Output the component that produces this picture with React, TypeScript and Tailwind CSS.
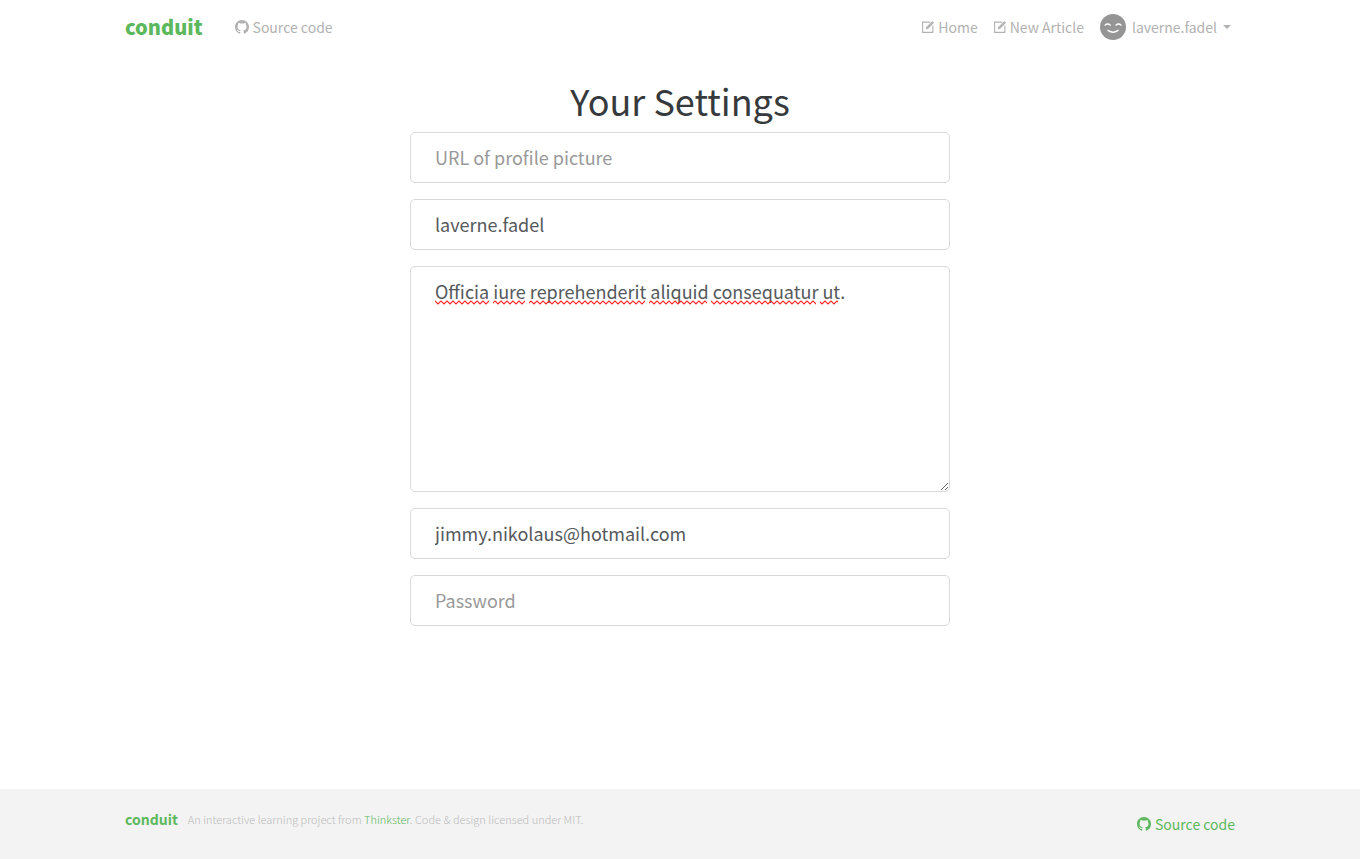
import React from "react";

const fieldBase =
  "block w-full rounded-[5px] border border-[#d9d9d9] bg-white px-6 text-lg leading-6 text-[#55595c] placeholder:text-[#999] outline-none focus:border-[#66afe9]";

function GithubMark() {
  return (
    <svg viewBox="0 0 16 16" className="h-3.5 w-3.5 shrink-0" fill="currentColor" aria-hidden="true">
      <path d="M8 0C3.58 0 0 3.58 0 8c0 3.54 2.29 6.53 5.47 7.59.4.07.55-.17.55-.38 0-.19-.01-.82-.01-1.49-2.01.37-2.53-.49-2.69-.94-.09-.23-.48-.94-.82-1.13-.28-.15-.68-.52-.01-.53.63-.01 1.08.58 1.23.82.72 1.21 1.87.87 2.33.66.07-.52.28-.87.51-1.07-1.78-.2-3.64-.89-3.64-3.95 0-.87.31-1.59.82-2.15-.08-.2-.36-1.02.08-2.12 0 0 .67-.21 2.2.82.64-.18 1.32-.27 2-.27s1.36.09 2 .27c1.53-1.04 2.2-.82 2.2-.82.44 1.1.16 1.92.08 2.12.51.56.82 1.27.82 2.15 0 3.07-1.87 3.75-3.65 3.95.29.25.54.73.54 1.48 0 1.07-.01 1.93-.01 2.2 0 .21.15.46.55.38A8.01 8.01 0 0 0 16 8c0-4.42-3.58-8-8-8z" />
    </svg>
  );
}

function ComposeMark() {
  return (
    <svg viewBox="0 0 12 12" className="h-3 w-3 shrink-0" aria-hidden="true">
      <path d="M8 1.1H.6v10.3h10.3V4.4" fill="none" stroke="currentColor" strokeWidth="1.1" />
      <path d="M3.7 8.6l.7-2.5L10.3.1 12 1.8 6.2 7.8z" fill="currentColor" />
    </svg>
  );
}

function Avatar() {
  return (
    <svg viewBox="0 0 26 26" className="h-[26px] w-[26px] shrink-0" aria-hidden="true">
      <circle cx="13" cy="13" r="13" fill="#959595" />
      <g fill="none" stroke="#fff" strokeLinecap="round">
        <path d="M5 11.2q2.7-2.4 5.4 0M15.8 11.2q2.7-2.4 5.4 0" strokeWidth="1.2" />
        <path d="M8 16.4q5 3.6 10 0" strokeWidth="1.5" />
      </g>
    </svg>
  );
}

const misspelled = [
  [0, 54],
  [58, 32],
  [94, 116],
  [214, 58],
  [276, 105],
  [385, 18],
];

function SpellingMarks() {
  return (
    <svg className="pointer-events-none absolute top-[34px] left-[25px] h-[5px] w-[410px]" aria-hidden="true">
      <defs>
        <pattern id="wave" width="6" height="5" patternUnits="userSpaceOnUse">
          <path d="M-1.5 2.5L0 1l3 3 3-3 1.5 1.5" fill="none" stroke="#f22" strokeWidth="1.2" />
        </pattern>
      </defs>
      {misspelled.map(([x, w]) => (
        <rect key={x} x={x} width={w} height="5" fill="url(#wave)" />
      ))}
    </svg>
  );
}

export default function App() {
  return (
    <div className="flex min-h-screen flex-col bg-white font-['Noto_Sans_CJK_SC','Noto_Sans',sans-serif] text-[#373a3c]">
      <nav className="px-4">
        <div className="mx-auto flex h-[54px] w-full max-w-[1110px] items-center text-sm leading-6 text-[#b2b2b2]">
          <a href="#" className="mr-8 text-xl font-black text-[#5cb85c]">conduit</a>
          <a href="#source" className="flex items-center gap-1"><GithubMark />Source code</a>
          <div className="ml-auto flex items-center gap-4 pr-1">
            <a href="#home" className="flex items-center gap-1"><ComposeMark />Home</a>
            <a href="#new" className="flex items-center gap-1"><ComposeMark />New Article</a>
            <button type="button" className="flex items-center gap-1.5">
              <Avatar />
              <span>laverne.fadel</span>
              <svg viewBox="0 0 8 4" className="h-1 w-2" fill="currentColor" aria-hidden="true"><path d="M0 0h8L4 4z" /></svg>
            </button>
          </div>
        </div>
      </nav>

      <main className="mx-auto w-full max-w-[540px] flex-1 pt-6">
        <h1 className="mb-2.5 text-center text-4xl leading-[44px]">Your Settings</h1>
        <form className="flex flex-col gap-4">
          <input type="text" aria-label="URL of profile picture" placeholder="URL of profile picture" className={`${fieldBase} h-[51px] pb-0.5`} />
          <input type="text" aria-label="Username" defaultValue="laverne.fadel" className={`${fieldBase} h-[51px] pb-0.5`} />
          <div className="relative">
            <textarea aria-label="Bio" spellCheck={false} defaultValue="Officia iure reprehenderit aliquid consequatur ut." className={`${fieldBase} h-[226px] resize-y py-3`} />
            <SpellingMarks />
          </div>
          <input type="email" aria-label="Email" defaultValue="jimmy.nikolaus@hotmail.com" className={`${fieldBase} h-[51px] pb-0.5`} />
          <input type="password" aria-label="Password" placeholder="Password" className={`${fieldBase} h-[51px] pb-0.5`} />
        </form>
      </main>

      <footer className="bg-[#f3f3f3] px-4">
        <div className="mx-auto flex h-[70px] w-full max-w-[1110px] items-center">
          <a href="#" className="mr-2.5 mb-2.5 text-sm font-bold text-[#5cb85c]">conduit</a>
          <p className="mb-2.5 text-[11px] font-light text-[#bbb]">
            An interactive learning project from <a href="#thinkster" className="text-[#5cb85c]">Thinkster</a>. Code &amp; design licensed under MIT.
          </p>
          <a href="#source" className="ml-auto flex items-center gap-1 text-sm text-[#5cb85c]"><GithubMark />Source code</a>
        </div>
      </footer>
    </div>
  );
}
